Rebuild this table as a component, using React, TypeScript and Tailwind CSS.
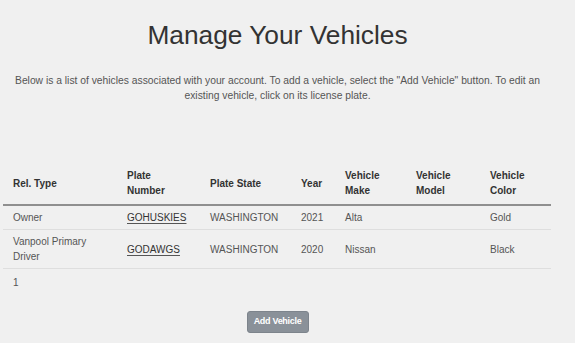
import React from 'react';

interface Vehicle {
  relType: string;
  plate: string;
  state: string;
  year: string;
  make: string;
  model: string;
  color: string;
}

const vehicles: Vehicle[] = [
  { relType: 'Owner', plate: 'GOHUSKIES', state: 'WASHINGTON', year: '2021', make: 'Alta', model: '', color: 'Gold' },
  { relType: 'Vanpool Primary Driver', plate: 'GODAWGS', state: 'WASHINGTON', year: '2020', make: 'Nissan', model: '', color: 'Black' },
];

const columns = [
  { label: 'Rel. Type', width: 'w-[114px]' },
  { label: 'Plate Number', width: 'w-[83px]' },
  { label: 'Plate State', width: 'w-[91px]' },
  { label: 'Year', width: 'w-[44px]' },
  { label: 'Vehicle Make', width: 'w-[71px]' },
  { label: 'Vehicle Model', width: 'w-[74px]' },
  { label: 'Vehicle Color', width: 'w-[71px]' },
];

const cell = 'px-[10px] py-[4px] align-middle';

export default function App() {
  return (
    <div className="min-h-screen bg-[#f0f0f0] font-['Liberation_Sans',Arial,sans-serif] text-[#555]">
      <div className="ml-[3px] w-[549px] pt-[20px] pb-[10px]">
        <h1 className="text-center text-[26.3px] leading-[30px] text-[#333]">Manage Your Vehicles</h1>
        <p className="mt-[23px] px-[6px] text-center text-[10.3px] leading-[15px] text-[#555]">
          Below is a list of vehicles associated with your account. To add a vehicle, select the "Add Vehicle" button. To edit an existing vehicle, click on its license plate.
        </p>

        <table className="mt-[59px] w-[548px] table-fixed text-left text-[10px] leading-[15px]">
          <thead>
            <tr className="border-b-2 border-[#8f8f8f]">
              {columns.map((col) => (
                <th key={col.label} className={`${col.width} px-[10px] py-[6px] align-middle font-bold text-[#333]`}>
                  {col.label}
                </th>
              ))}
            </tr>
          </thead>
          <tbody>
            {vehicles.map((v) => (
              <tr key={v.plate} className="border-b border-[#dedede]">
                <td className={cell}>{v.relType}</td>
                <td className={cell}>
                  <a href="#" className="text-[#333] underline decoration-[#555] underline-offset-2">
                    {v.plate}
                  </a>
                </td>
                <td className={cell}>{v.state}</td>
                <td className={cell}>{v.year}</td>
                <td className={cell}>{v.make}</td>
                <td className={cell}>{v.model}</td>
                <td className={cell}>{v.color}</td>
              </tr>
            ))}
            <tr>
              <td colSpan={7} className="px-[10px] py-[6px]">1</td>
            </tr>
          </tbody>
        </table>

        <div className="mt-[15px] flex justify-center">
          <button className="h-[22px] w-[62px] rounded-[3px] border border-[#7d848c] bg-[#8a9199] text-[9px] font-bold tracking-[-0.3px] text-white">
            Add Vehicle
          </button>
        </div>
      </div>
    </div>
  );
}
